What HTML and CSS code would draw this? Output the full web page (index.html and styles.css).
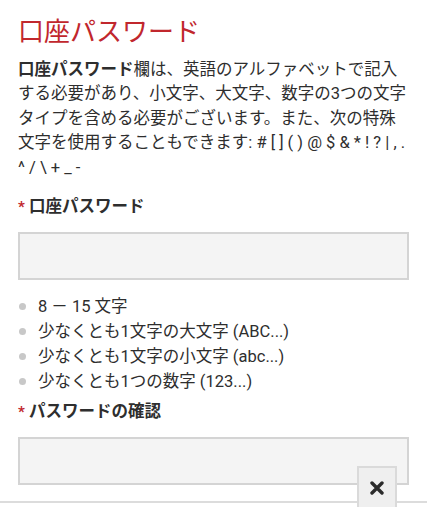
FILE: index.html
```html
<!doctype html>
<html lang="ja">
<head>
<meta charset="utf-8">
<title>口座パスワード</title>
<link rel="stylesheet" href="styles.css">
</head>
<body>
<div class="page">
	<h1 class="title">口座パスワード</h1>
	<p class="intro"><b>口座パスワード</b>欄は、英語のアルファベットで記入する必要があり、小文字、大文字、数字の3つの文字タイプを含める必要がございます。また、次の特殊文字を使用することもできます: # [ ] ( ) @ $ &amp; * ! ? | , . ^ / \ + _ -</p>

	<label class="field-label"><span class="req">*</span> 口座パスワード</label>
	<input class="field" type="password">

	<ul class="rules">
		<li>8 － 15 文字</li>
		<li>少なくとも1文字の大文字 (ABC...)</li>
		<li>少なくとも1文字の小文字 (abc...)</li>
		<li>少なくとも1つの数字 (123...)</li>
	</ul>

	<label class="field-label"><span class="req">*</span> パスワードの確認</label>
	<input class="field" type="password">
</div>
<div class="bottombar"></div>
<div class="close-btn">
	<svg width="14" height="14" viewBox="0 0 14 14"><path d="M2 2 L12 12 M12 2 L2 12" stroke="#2b2b2b" stroke-width="3.4" stroke-linecap="round"/></svg>
</div>
</body>
</html>
```

FILE: styles.css
```css
html, body {
	margin: 0;
	background: #fff;
	font-family: Roboto, "Noto Sans CJK JP", sans-serif;
	color: #2e2e2e;
}
.page {
	padding: 14px 18px 30px 18px;
}
.title {
	margin: 0 0 8px 0;
	font-size: 26px;
	font-weight: 400;
	line-height: 36px;
	color: #c1272d;
}
.intro {
	margin: 0;
	font-size: 16.5px;
	line-height: 24.4px;
}
.intro b {
	font-weight: 700;
}
.field-label {
	display: block;
	margin-top: 15px;
	font-size: 16.5px;
	font-weight: 700;
	line-height: 24px;
}
.req {
	color: #c1272d;
	font-size: 15px;
}
.field {
	display: block;
	box-sizing: border-box;
	width: 100%;
	height: 48px;
	margin-top: 13px;
	background: #f4f4f4;
	border: 2px solid #d4d4d4;
	border-radius: 0;
	outline: none;
}
.rules {
	list-style: none;
	margin: 14px 0 0 0;
	padding: 0;
	font-size: 16.5px;
	line-height: 25px;
}
.rules li {
	display: flex;
	align-items: center;
}
.rules li::before {
	content: "";
	width: 7px;
	height: 7px;
	border-radius: 50%;
	background: #c8c8c8;
	margin: 0 12px 0 1px;
}
.rules + .field-label {
	margin-top: 6px;
}
.bottombar {
	position: fixed;
	left: 0;
	right: 0;
	bottom: 0;
	height: 4px;
	background: #fff;
	border-top: 2px solid #dcdcdc;
}
.close-btn {
	position: fixed;
	left: 357px;
	bottom: 0;
	width: 36px;
	height: 39px;
	background: #efefef;
	border: 2px solid #dadada;
	border-bottom: none;
	display: flex;
	align-items: center;
	justify-content: center;
}
```
